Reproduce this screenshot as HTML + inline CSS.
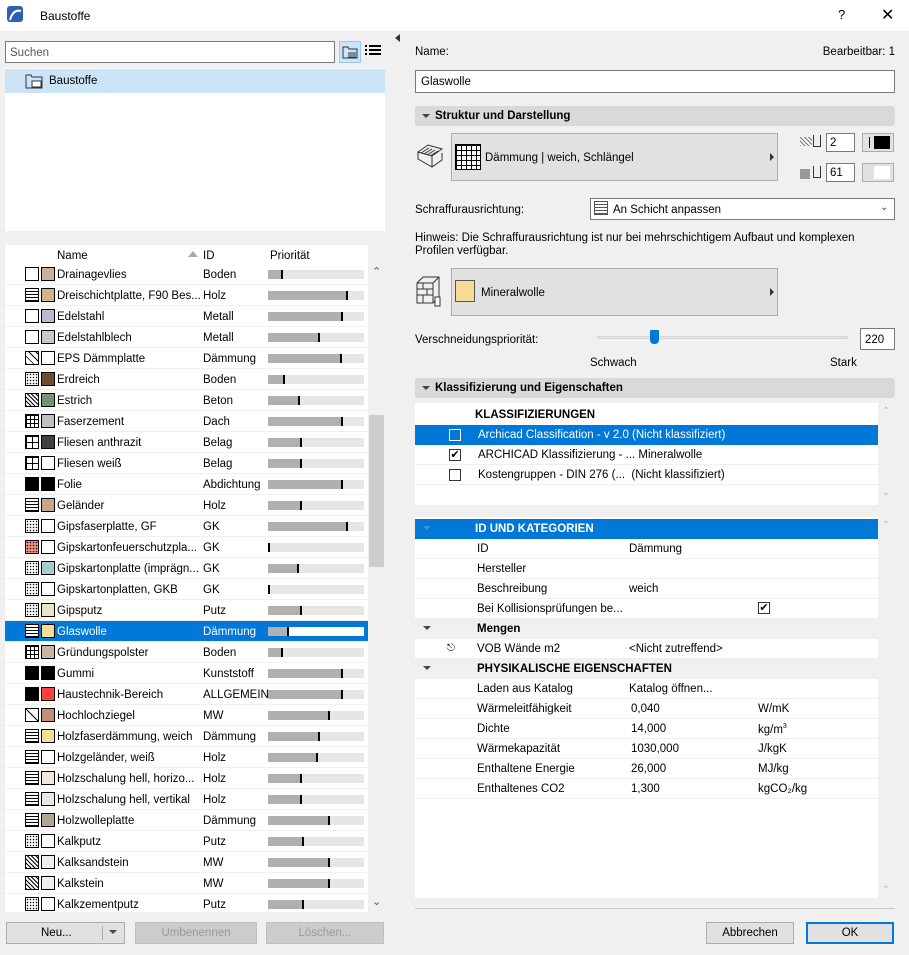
<!DOCTYPE html>
<html><head><meta charset="utf-8"><style>
*{box-sizing:border-box;margin:0;padding:0}
body{width:909px;height:955px;background:#f0f0f0;font-family:"Liberation Sans",sans-serif;font-size:11.5px;color:#000;position:relative;overflow:hidden}
.a{position:absolute}
.title{left:0;top:0;width:909px;height:31px;background:#fff}
.inp{background:#fff;border:1px solid #7a7a7a}
.row{position:absolute;left:5px;width:363px;height:21px;border-bottom:1px solid #f0f0f0;background:#fff}
.row .i1,.row .i2{position:absolute;top:3px;width:14px;height:14px;border:1px solid #000;background-color:#fff}
.row .i1{left:20px}.row .i2{left:36px}
.row .n{position:absolute;left:52px;top:5px;white-space:nowrap}
.row .d{position:absolute;left:198px;top:5px}
.row .b{position:absolute;left:263px;top:6px;width:96px;height:9px;background:#e6e6e6}
.row .b i{position:absolute;left:0;top:0;height:9px;background:#b0b0b0;border-right:2px solid #000}
.sel{background:#0078d7;color:#fff}
.row.sel{background:#0078d7}
.sel .b{background:#fff}
.hx{background-image:repeating-linear-gradient(45deg,#000 0 1px,#fff 1px 3px)}
.dt{background-image:radial-gradient(#000 0.6px,transparent 0.9px);background-size:3px 3px}
.gr{background-image:linear-gradient(#000 1px,transparent 1px),linear-gradient(90deg,#000 1px,transparent 1px);background-size:4px 4px}
.wv{background-image:repeating-linear-gradient(0deg,#000 0 1px,#fff 1px 3px)}
.sec{left:415px;width:480px;height:20px;background:#d9d9d9;border-radius:3px;font-weight:bold;padding:4px 0 0 20px}
.sec:before{content:"";position:absolute;left:7px;top:8px;border:4px solid transparent;border-top:4px solid #444;border-bottom:0}
.btn{background:#e1e1e1;border:1px solid #adadad;text-align:center;padding-top:4px}
.tr{position:absolute;left:415px;width:463px;height:20px;background:#fff;border-bottom:1px solid #f0f0f0}
.tr.sel{background:#0078d7;color:#fff;border-bottom-color:#0078d7}
.tr.gh{background:#f0f0f0;font-weight:bold}
.tr span{position:absolute;top:4px;white-space:nowrap}
.cb{position:absolute;width:12px;height:12px;border:1px solid #333;background:#fff;top:4px;font-size:11px;line-height:10px;text-align:center}
</style></head><body>
<div class="a title"></div>
<div class="a" style="left:7px;top:6px;width:16px;height:16px;background:#2d5fb4;border-radius:3px"></div>
<svg class="a" style="left:7px;top:6px" width="16" height="16"><path d="M3 14 Q6 3 14 5" stroke="#fff" stroke-width="2" fill="none"/></svg>
<div class="a" style="left:40px;top:9px;font-size:12px">Baustoffe</div>
<div class="a" style="left:838px;top:7px;font-size:13px">?</div>
<div class="a" style="left:881px;top:5px;font-size:16px">✕</div>

<!-- left -->
<div class="a inp" style="left:5px;top:41px;width:330px;height:22px;padding:5px 4px;color:#555">Suchen</div>
<div class="a" style="left:339px;top:41px;width:22px;height:22px;background:#cce4f7;border:1px solid #99c9ef"></div>
<svg class="a" style="left:342px;top:44px" width="16" height="16"><path d="M1 3h5l1 2h8v9H1z" fill="none" stroke="#333"/><path d="M6 9h8M6 11h8M6 13h8" stroke="#333"/></svg>
<svg class="a" style="left:365px;top:45px" width="16" height="12"><path d="M0 1h2M4 1h12M0 5h2M4 5h12M0 9h2M4 9h12" stroke="#000" stroke-width="2"/></svg>
<div class="a" style="left:5px;top:68px;width:380px;height:163px;background:#fff"></div>
<div class="a" style="left:5px;top:69px;width:380px;height:24px;background:#cce4f7"></div>
<svg class="a" style="left:25px;top:72px" width="20" height="18"><path d="M1 3h5l1 2h10v11H1z" fill="none" stroke="#333"/><rect x="7" y="9" width="9" height="6" fill="#fff" stroke="#333"/></svg>
<div class="a" style="left:49px;top:75px">Baustoffe</div>

<div class="a" style="left:5px;top:245px;width:363px;height:19px;background:#fff"></div>
<div class="a" style="left:57px;top:250px">Name</div>
<div class="a" style="left:188px;top:251px;border:5px solid transparent;border-bottom:6px solid #aaa;border-top:0"></div>
<div class="a" style="left:203px;top:250px">ID</div>
<div class="a" style="left:270px;top:250px">Priorität</div>
<div class="a" style="left:368px;top:245px;width:17px;height:668px;background:#f0f0f0"></div>
<div class="a" style="left:369px;top:415px;width:15px;height:152px;background:#cdcdcd"></div>
<div class="a" style="left:372px;top:265px;font-size:11px;color:#555">&#8963;</div>
<div class="a" style="left:372px;top:895px;font-size:11px;color:#555">&#8964;</div>

<div class="row" style="top:264px"><div class="i1"></div><div class="i2" style="background:#c8b09a"></div><div class="n">Drainagevlies</div><div class="d">Boden</div><div class="b"><i style="width:15px"></i></div></div>
<div class="row" style="top:285px"><div class="i1 wv"></div><div class="i2" style="background:#d4b48c"></div><div class="n">Dreischichtplatte, F90 Bes...</div><div class="d">Holz</div><div class="b"><i style="width:80px"></i></div></div>
<div class="row" style="top:306px"><div class="i1"></div><div class="i2" style="background:#b8bccc"></div><div class="n">Edelstahl</div><div class="d">Metall</div><div class="b"><i style="width:75px"></i></div></div>
<div class="row" style="top:327px"><div class="i1"></div><div class="i2" style="background:#c8c8c8"></div><div class="n">Edelstahlblech</div><div class="d">Metall</div><div class="b"><i style="width:52px"></i></div></div>
<div class="row" style="top:348px"><div class="i1" style="background:repeating-linear-gradient(45deg,#000 0 1px,#fff 1px 5px),repeating-linear-gradient(-45deg,#000 0 1px,#fff 1px 5px)"></div><div class="i2"></div><div class="n">EPS Dämmplatte</div><div class="d">Dämmung</div><div class="b"><i style="width:74px"></i></div></div>
<div class="row" style="top:369px"><div class="i1 dt"></div><div class="i2" style="background:#6b4e2e"></div><div class="n">Erdreich</div><div class="d">Boden</div><div class="b"><i style="width:17px"></i></div></div>
<div class="row" style="top:390px"><div class="i1 hx"></div><div class="i2" style="background:#7a9078"></div><div class="n">Estrich</div><div class="d">Beton</div><div class="b"><i style="width:32px"></i></div></div>
<div class="row" style="top:411px"><div class="i1 gr"></div><div class="i2" style="background:#c0c0c0"></div><div class="n">Faserzement</div><div class="d">Dach</div><div class="b"><i style="width:75px"></i></div></div>
<div class="row" style="top:432px"><div class="i1 gr" style="background-size:6px 6px"></div><div class="i2" style="background:#404040"></div><div class="n">Fliesen anthrazit</div><div class="d">Belag</div><div class="b"><i style="width:34px"></i></div></div>
<div class="row" style="top:453px"><div class="i1 gr" style="background-size:6px 6px"></div><div class="i2"></div><div class="n">Fliesen weiß</div><div class="d">Belag</div><div class="b"><i style="width:34px"></i></div></div>
<div class="row" style="top:474px"><div class="i1" style="background:#000"></div><div class="i2" style="background:#000"></div><div class="n">Folie</div><div class="d">Abdichtung</div><div class="b"><i style="width:75px"></i></div></div>
<div class="row" style="top:495px"><div class="i1 wv"></div><div class="i2" style="background:#c8a888"></div><div class="n">Geländer</div><div class="d">Holz</div><div class="b"><i style="width:34px"></i></div></div>
<div class="row" style="top:516px"><div class="i1 dt"></div><div class="i2"></div><div class="n">Gipsfaserplatte, GF</div><div class="d">GK</div><div class="b"><i style="width:80px"></i></div></div>
<div class="row" style="top:537px"><div class="i1 dt" style="background-color:#f09080"></div><div class="i2"></div><div class="n">Gipskartonfeuerschutzpla...</div><div class="d">GK</div><div class="b"><i style="width:1px"></i></div></div>
<div class="row" style="top:558px"><div class="i1 dt"></div><div class="i2" style="background:#a8c8d0"></div><div class="n">Gipskartonplatte (imprägn...</div><div class="d">GK</div><div class="b"><i style="width:31px"></i></div></div>
<div class="row" style="top:579px"><div class="i1 dt"></div><div class="i2"></div><div class="n">Gipskartonplatten, GKB</div><div class="d">GK</div><div class="b"><i style="width:1px"></i></div></div>
<div class="row" style="top:600px"><div class="i1 dt"></div><div class="i2" style="background:#ece4cc"></div><div class="n">Gipsputz</div><div class="d">Putz</div><div class="b"><i style="width:34px"></i></div></div>
<div class="row sel" style="top:621px"><div class="i1 wv"></div><div class="i2" style="background:#f5dc96"></div><div class="n">Glaswolle</div><div class="d">Dämmung</div><div class="b"><i style="width:21px"></i></div></div>
<div class="row" style="top:642px"><div class="i1 gr"></div><div class="i2" style="background:#c8b4a0"></div><div class="n">Gründungspolster</div><div class="d">Boden</div><div class="b"><i style="width:15px"></i></div></div>
<div class="row" style="top:663px"><div class="i1" style="background:#000"></div><div class="i2" style="background:#000"></div><div class="n">Gummi</div><div class="d">Kunststoff</div><div class="b"><i style="width:75px"></i></div></div>
<div class="row" style="top:684px"><div class="i1" style="background:#000"></div><div class="i2" style="background:#ff4040"></div><div class="n">Haustechnik-Bereich</div><div class="d">ALLGEMEIN</div><div class="b"><i style="width:75px"></i></div></div>
<div class="row" style="top:705px"><div class="i1" style="background:linear-gradient(45deg,#fff 47%,#000 47% 53%,#fff 53%)"></div><div class="i2" style="background:#c09070"></div><div class="n">Hochlochziegel</div><div class="d">MW</div><div class="b"><i style="width:62px"></i></div></div>
<div class="row" style="top:726px"><div class="i1 wv"></div><div class="i2" style="background:#f5dc96"></div><div class="n">Holzfaserdämmung, weich</div><div class="d">Dämmung</div><div class="b"><i style="width:52px"></i></div></div>
<div class="row" style="top:747px"><div class="i1 wv"></div><div class="i2"></div><div class="n">Holzgeländer, weiß</div><div class="d">Holz</div><div class="b"><i style="width:50px"></i></div></div>
<div class="row" style="top:768px"><div class="i1 wv"></div><div class="i2" style="background:#eee8dc"></div><div class="n">Holzschalung hell, horizo...</div><div class="d">Holz</div><div class="b"><i style="width:34px"></i></div></div>
<div class="row" style="top:789px"><div class="i1 wv"></div><div class="i2" style="background:#eee8dc"></div><div class="n">Holzschalung hell, vertikal</div><div class="d">Holz</div><div class="b"><i style="width:34px"></i></div></div>
<div class="row" style="top:810px"><div class="i1 wv"></div><div class="i2" style="background:#b0a890"></div><div class="n">Holzwolleplatte</div><div class="d">Dämmung</div><div class="b"><i style="width:62px"></i></div></div>
<div class="row" style="top:831px"><div class="i1 dt"></div><div class="i2"></div><div class="n">Kalkputz</div><div class="d">Putz</div><div class="b"><i style="width:36px"></i></div></div>
<div class="row" style="top:852px"><div class="i1 hx"></div><div class="i2" style="background:#eee"></div><div class="n">Kalksandstein</div><div class="d">MW</div><div class="b"><i style="width:62px"></i></div></div>
<div class="row" style="top:873px"><div class="i1 hx"></div><div class="i2" style="background:#eee"></div><div class="n">Kalkstein</div><div class="d">MW</div><div class="b"><i style="width:62px"></i></div></div>
<div class="row" style="top:894px;height:19px;overflow:hidden"><div class="i1 dt"></div><div class="i2"></div><div class="n">Kalkzementputz</div><div class="d">Putz</div><div class="b"><i style="width:36px"></i></div></div>

<div class="a btn" style="left:6px;top:922px;width:119px;height:22px"><span style="position:absolute;left:34px;top:4px">Neu...</span></div>
<div class="a" style="left:102px;top:926px;width:1px;height:14px;background:#adadad"></div>
<div class="a" style="left:109px;top:930px;border:4px solid transparent;border-top:4px solid #444;border-bottom:0"></div>
<div class="a btn" style="left:135px;top:922px;width:122px;height:22px;color:#999;background:#ccc;border-color:#bfbfbf">Umbenennen</div>
<div class="a btn" style="left:266px;top:922px;width:118px;height:22px;color:#999;background:#ccc;border-color:#bfbfbf">Löschen...</div>

<!-- divider -->
<div class="a" style="left:395px;top:34px;border:4px solid transparent;border-right:5px solid #333;border-left:0"></div>

<!-- right -->
<div class="a" style="left:415px;top:46px">Name:</div>
<div class="a" style="right:14px;top:46px">Bearbeitbar: 1</div>
<div class="a inp" style="left:415px;top:70px;width:480px;height:23px;padding:5px 5px">Glaswolle</div>

<div class="a sec" style="top:106px">Struktur und Darstellung</div>
<svg class="a" style="left:416px;top:142px" width="28" height="28"><path d="M2 10l10-7 14 4-10 7z M2 10v7l14 8 10-7v-7 M16 14v11" fill="none" stroke="#333"/><path d="M5 11l8-5M8 12l8-5M11 13l8-5M14 14l8-5" stroke="#333"/></svg>
<div class="a btn" style="left:451px;top:133px;width:327px;height:48px"></div>
<div class="a gr" style="left:455px;top:144px;width:26px;height:26px;border:1px solid #000;background-color:#fff;background-size:5px 5px"></div>
<div class="a" style="left:485px;top:152px">Dämmung | weich, Schlängel</div>
<div class="a" style="left:770px;top:153px;border:4px solid transparent;border-left:4px solid #333;border-right:0"></div>
<div class="a hx" style="left:800px;top:137px;width:12px;height:9px;opacity:.5"></div>
<div class="a" style="left:813px;top:135px;width:8px;height:12px;border:1px solid #333;border-top:0"></div>
<div class="a inp" style="left:826px;top:133px;width:29px;height:19px;padding:3px 3px">2</div>
<div class="a" style="left:862px;top:133px;width:32px;height:19px;background:#e1e1e1;border:1px solid #adadad"></div>
<div class="a" style="left:869px;top:137px;width:1px;height:11px;background:#000"></div>
<div class="a" style="left:874px;top:136px;width:16px;height:13px;background:#000"></div>
<div class="a" style="left:800px;top:169px;width:10px;height:10px;background:#999"></div>
<div class="a" style="left:813px;top:166px;width:8px;height:12px;border:1px solid #333;border-top:0"></div>
<div class="a inp" style="left:826px;top:163px;width:29px;height:19px;padding:3px 3px">61</div>
<div class="a" style="left:862px;top:163px;width:32px;height:19px;background:#e1e1e1;border:1px solid #adadad"></div>
<div class="a" style="left:874px;top:166px;width:16px;height:13px;background:#fff"></div>

<div class="a" style="left:415px;top:204px">Schraffurausrichtung:</div>
<div class="a inp" style="left:590px;top:198px;width:305px;height:22px;padding:5px 0 0 22px">An Schicht anpassen</div>
<div class="a" style="left:594px;top:201px;width:14px;height:14px;border:1px solid #555;background:repeating-linear-gradient(0deg,#555 0 1px,#fff 1px 3px)"></div>
<div class="a" style="left:880px;top:202px;font-size:10px;color:#444">&#8964;</div>
<div class="a" style="left:415px;top:232px;line-height:13px;width:480px">Hinweis: Die Schraffurausrichtung ist nur bei mehrschichtigem Aufbaut und komplexen<br>Profilen verfügbar.</div>

<svg class="a" style="left:415px;top:275px" width="30" height="34"><path d="M2 8l6-6h16v20l-6 6H2z M2 8h16v20 M18 8l6-6 M2 14h16M2 20h16M8 8v6M12 14v6M8 20v8" fill="none" stroke="#333"/><rect x="20" y="22" width="5" height="9" fill="#fff" stroke="#333"/></svg>
<div class="a btn" style="left:451px;top:268px;width:327px;height:48px"></div>
<div class="a" style="left:455px;top:280px;width:20px;height:22px;background:#f5dc96;border:1px solid #555"></div>
<div class="a" style="left:481px;top:287px">Mineralwolle</div>
<div class="a" style="left:770px;top:288px;border:4px solid transparent;border-left:4px solid #333;border-right:0"></div>

<div class="a" style="left:415px;top:334px">Verschneidungspriorität:</div>
<div class="a" style="left:597px;top:336px;width:251px;height:3px;background:#e6e6e6;border:1px solid #d6d6d6"></div>
<div class="a" style="left:650px;top:330px;width:9px;height:14px;background:#0078d7;border-radius:1px 1px 4px 4px"></div>
<div class="a inp" style="left:860px;top:328px;width:35px;height:22px;padding:5px 4px">220</div>
<div class="a" style="left:590px;top:357px">Schwach</div>
<div class="a" style="left:830px;top:357px">Stark</div>

<div class="a sec" style="top:378px">Klassifizierung und Eigenschaften</div>
<div class="a" style="left:415px;top:403px;width:478px;height:102px;background:#fff"></div>
<div class="a" style="left:878px;top:403px;width:15px;height:102px;background:#f0f0f0"></div>
<div class="a" style="left:882px;top:406px;font-size:10px;color:#bbb">&#8963;</div>
<div class="a" style="left:882px;top:487px;font-size:10px;color:#bbb">&#8964;</div>
<div class="a" style="left:475px;top:409px;font-weight:bold">KLASSIFIZIERUNGEN</div>
<div class="tr sel" style="top:425px"><div class="cb" style="left:34px;border-color:#fff;background:transparent"></div><span style="left:63px">Archicad Classification - v 2.0 (Nicht klassifiziert)</span></div>
<div class="tr" style="top:445px"><div class="cb" style="left:34px">✔</div><span style="left:63px">ARCHICAD Klassifizierung - ... Mineralwolle</span></div>
<div class="tr" style="top:465px"><div class="cb" style="left:34px"></div><span style="left:63px">Kostengruppen - DIN 276 (...&nbsp; (Nicht klassifiziert)</span></div>

<div class="a" style="left:415px;top:517px;width:478px;height:381px;background:#fff"></div>
<div class="a" style="left:878px;top:517px;width:15px;height:381px;background:#f0f0f0"></div>
<div class="a" style="left:882px;top:520px;font-size:10px;color:#bbb">&#8963;</div>
<div class="a" style="left:882px;top:880px;font-size:10px;color:#bbb">&#8964;</div>
<div class="tr sel" style="top:519px;font-weight:bold"><span style="left:60px">ID UND KATEGORIEN</span><span style="left:8px;top:7px;border:4px solid transparent;border-top:4px solid #4a90d0;border-bottom:0"></span></div>
<div class="tr" style="top:539px"><span style="left:62px">ID</span><span style="left:214px">Dämmung</span></div>
<div class="tr" style="top:559px"><span style="left:62px">Hersteller</span></div>
<div class="tr" style="top:579px"><span style="left:62px">Beschreibung</span><span style="left:214px">weich</span></div>
<div class="tr" style="top:599px"><span style="left:62px">Bei Kollisionsprüfungen be...</span><div class="cb" style="left:343px;top:3px">✔</div></div>
<div class="tr gh" style="top:619px"><span style="left:62px">Mengen</span><span style="left:8px;top:7px;border:4px solid transparent;border-top:4px solid #444;border-bottom:0"></span></div>
<div class="tr" style="top:639px"><span style="left:32px;font-size:10px">&#9099;</span><span style="left:62px">VOB Wände m2</span><span style="left:214px">&lt;Nicht zutreffend&gt;</span></div>
<div class="tr gh" style="top:659px"><span style="left:62px">PHYSIKALISCHE EIGENSCHAFTEN</span><span style="left:8px;top:7px;border:4px solid transparent;border-top:4px solid #444;border-bottom:0"></span></div>
<div class="tr" style="top:679px"><span style="left:62px">Laden aus Katalog</span><span style="left:214px">Katalog öffnen...</span></div>
<div class="tr" style="top:699px"><span style="left:62px">Wärmeleitfähigkeit</span><span style="left:216px">0,040</span><span style="left:343px">W/mK</span></div>
<div class="tr" style="top:719px"><span style="left:62px">Dichte</span><span style="left:216px">14,000</span><span style="left:343px">kg/m<sup style="font-size:7px">3</sup></span></div>
<div class="tr" style="top:739px"><span style="left:62px">Wärmekapazität</span><span style="left:216px">1030,000</span><span style="left:343px">J/kgK</span></div>
<div class="tr" style="top:759px"><span style="left:62px">Enthaltene Energie</span><span style="left:216px">26,000</span><span style="left:343px">MJ/kg</span></div>
<div class="tr" style="top:779px"><span style="left:62px">Enthaltenes CO2</span><span style="left:216px">1,300</span><span style="left:343px">kgCO₂/kg</span></div>

<div class="a" style="left:415px;top:908px;width:480px;height:1px;background:#c8c8c8"></div>
<div class="a btn" style="left:706px;top:922px;width:88px;height:22px">Abbrechen</div>
<div class="a btn" style="left:806px;top:922px;width:88px;height:22px;border:2px solid #0078d7;padding-top:3px">OK</div>
</body></html>
